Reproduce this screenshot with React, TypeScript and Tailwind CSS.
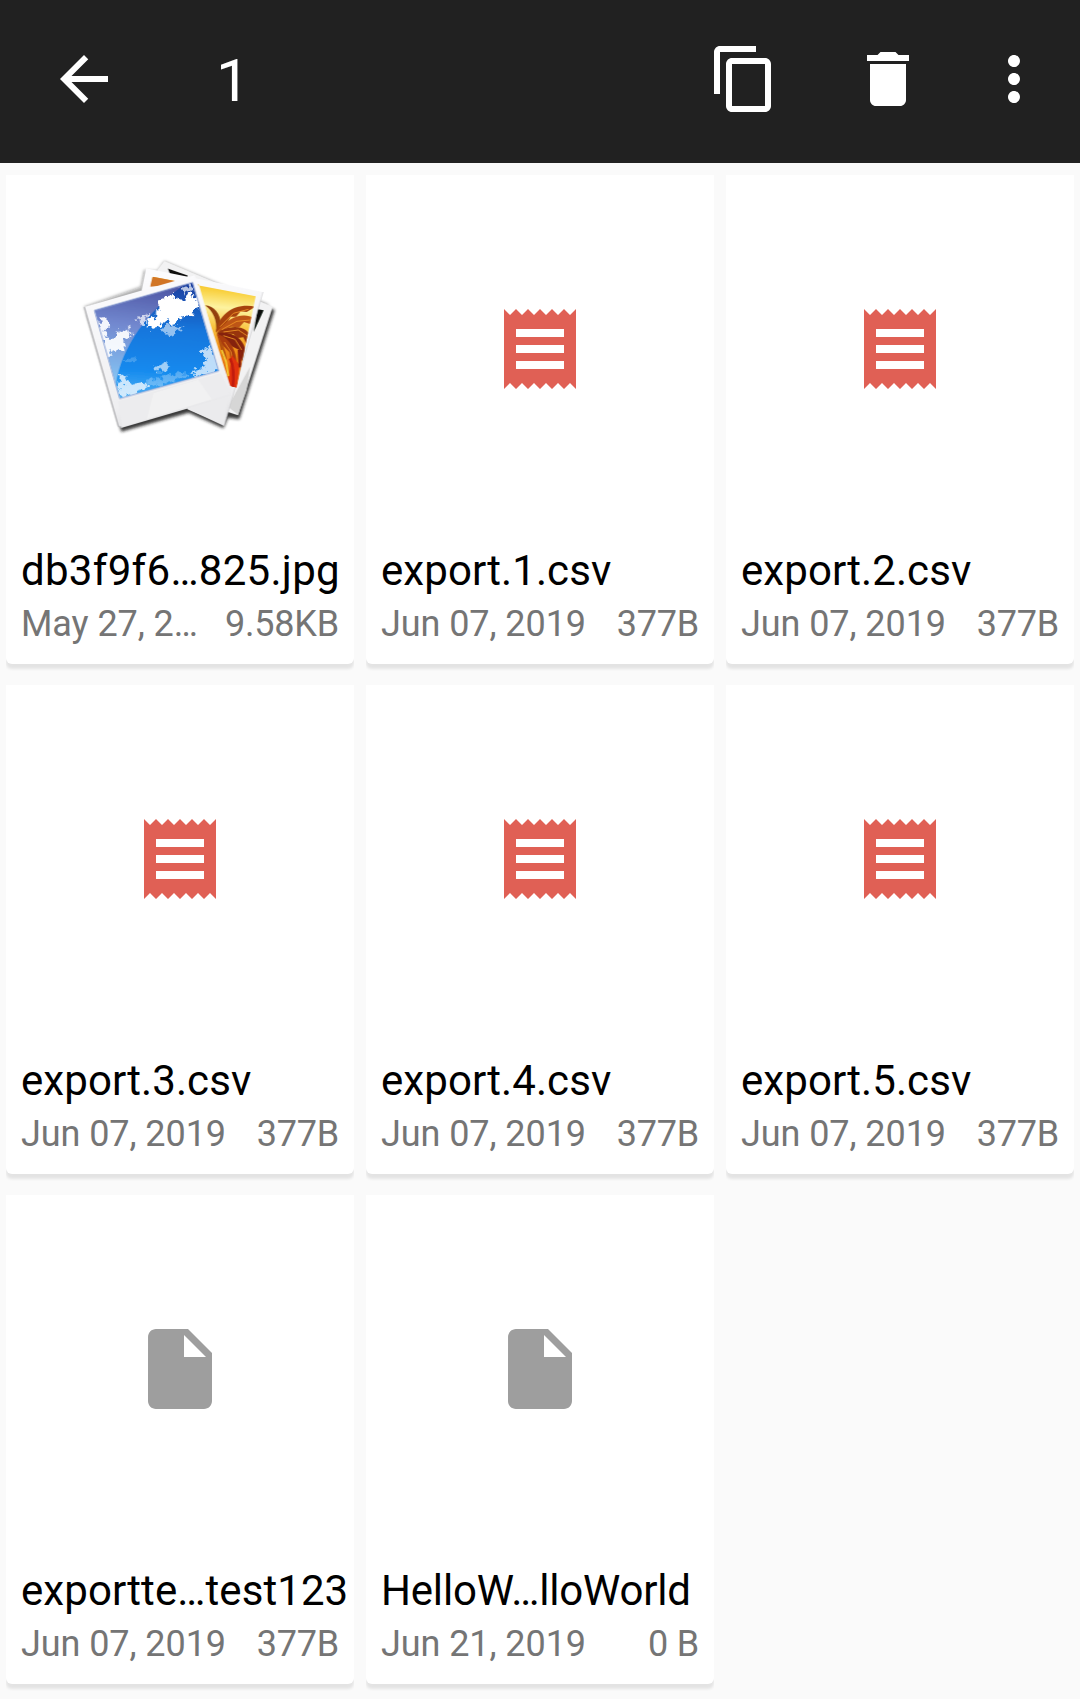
import React from "react";

type FileItem = {
  name: string;
  date: string;
  size: string;
  kind: "photo" | "csv" | "file";
  nameTracking: string;
};

const files: FileItem[] = [
  { name: "db3f9f6…825.jpg", date: "May 27, 2…", size: "9.58KB", kind: "photo", nameTracking: "tracking-[0.3px]" },
  { name: "export.1.csv", date: "Jun 07, 2019", size: "377B", kind: "csv", nameTracking: "tracking-[0.08px]" },
  { name: "export.2.csv", date: "Jun 07, 2019", size: "377B", kind: "csv", nameTracking: "tracking-[0.08px]" },
  { name: "export.3.csv", date: "Jun 07, 2019", size: "377B", kind: "csv", nameTracking: "tracking-[0.08px]" },
  { name: "export.4.csv", date: "Jun 07, 2019", size: "377B", kind: "csv", nameTracking: "tracking-[0.08px]" },
  { name: "export.5.csv", date: "Jun 07, 2019", size: "377B", kind: "csv", nameTracking: "tracking-[0.08px]" },
  { name: "exportte…test123", date: "Jun 07, 2019", size: "377B", kind: "file", nameTracking: "tracking-[0.08px]" },
  { name: "HelloW…lloWorld", date: "Jun 21, 2019", size: "0 B", kind: "file", nameTracking: "tracking-[-0.18px]" },
];

function Icon({ d, className }: { d: string; className: string }) {
  return (
    <svg viewBox="0 0 24 24" fill="currentColor" className={className}>
      <path d={d} />
    </svg>
  );
}

const BACK = "M20 11H7.83l5.59-5.59L12 4l-8 8 8 8 1.41-1.41L7.83 13H20v-2z";
const COPY =
  "M16 1H4c-1.1 0-2 .9-2 2v14h2V3h12V1zm3 4H8c-1.1 0-2 .9-2 2v14c0 1.1.9 2 2 2h11c1.1 0 2-.9 2-2V7c0-1.1-.9-2-2-2zm0 16H8V7h11v14z";
const TRASH = "M6 19c0 1.1.9 2 2 2h8c1.1 0 2-.9 2-2V7H6v12zM19 4h-3.5l-1-1h-5l-1 1H5v2h14V4z";
const MORE =
  "M12 8c1.1 0 2-.9 2-2s-.9-2-2-2-2 .9-2 2 .9 2 2 2zm0 2c-1.1 0-2 .9-2 2s.9 2 2 2 2-.9 2-2-.9-2-2-2zm0 6c-1.1 0-2 .9-2 2s.9 2 2 2 2-.9 2-2-.9-2-2-2z";
const RECEIPT =
  "M18 17H6v-2h12v2zm0-4H6v-2h12v2zm0-4H6V7h12v2zM3 22l1.5-1.5L6 22l1.5-1.5L9 22l1.5-1.5L12 22l1.5-1.5L15 22l1.5-1.5L18 22l1.5-1.5L21 22V2l-1.5 1.5L18 2l-1.5 1.5L15 2l-1.5 1.5L12 2l-1.5 1.5L9 2 7.5 3.5 6 2 4.5 3.5 3 2v20z";
const FILE =
  "M6 2c-1.1 0-1.99.9-1.99 2L4 20c0 1.1.89 2 1.99 2H18c1.1 0 2-.9 2-2V8l-6-6H6zm7 7V3.5L18.5 9H13z";

function PhotoStack() {
  return (
    <svg viewBox="0 0 660 570" className="h-[190px] w-[220px]">
      <defs>
        <linearGradient id="sky" x1="0.5" y1="0" x2="0.45" y2="1">
          <stop offset="0" stopColor="#1c3f9f" />
          <stop offset="0.4" stopColor="#1676dc" />
          <stop offset="0.75" stopColor="#1389ee" />
          <stop offset="1" stopColor="#4fb1f5" />
        </linearGradient>
        <linearGradient id="glare" x1="0.4" y1="0" x2="0.3" y2="1">
          <stop offset="0" stopColor="#4f58a6" />
          <stop offset="0.4" stopColor="#7288cf" />
          <stop offset="1" stopColor="#86c8f6" />
        </linearGradient>
        <linearGradient id="sunset" x1="0.55" y1="0" x2="0.45" y2="1">
          <stop offset="0" stopColor="#f3a71c" />
          <stop offset="0.12" stopColor="#f9cf3a" />
          <stop offset="0.27" stopColor="#fdf3a0" />
          <stop offset="0.45" stopColor="#f9c23c" />
          <stop offset="0.65" stopColor="#ef8a16" />
          <stop offset="1" stopColor="#d84308" />
        </linearGradient>
        <linearGradient id="paper" x1="0.4" y1="0" x2="0.6" y2="1">
          <stop offset="0" stopColor="#fbfbfd" />
          <stop offset="0.8" stopColor="#efeff1" />
          <stop offset="1" stopColor="#e2e2e4" />
        </linearGradient>
        <filter id="shade" x="-10%" y="-10%" width="120%" height="120%">
          <feGaussianBlur stdDeviation="4.5" />
        </filter>
        <filter id="soft">
          <feGaussianBlur stdDeviation="2.2" />
        </filter>
        <filter id="fluff" x="-10%" y="-10%" width="120%" height="120%">
          <feTurbulence type="fractalNoise" baseFrequency="0.06" numOctaves="3" seed="7" />
          <feDisplacementMap in="SourceGraphic" scale="34" xChannelSelector="R" yChannelSelector="G" />
          <feGaussianBlur stdDeviation="1.4" />
        </filter>
        <clipPath id="skyClip">
          <path d="M73 181 368 97 446 363 149 446Z" />
        </clipPath>
        <clipPath id="sunClip">
          <path d="M248 80 557 139 500 413 470 405 385 97 240 110Z" />
        </clipPath>
      </defs>
      {/* drop shadows */}
      <g filter="url(#shade)" fill="#181818">
        <path d="M50 190 154 545 356 488 460 535 474 503 508 508 614 180 450 110 300 380Z" opacity="0.85" />
        <path d="M283 33 262 62 222 60 212 110 42 170 70 250 300 200 600 165Z" opacity="0.35" />
      </g>
      <g filter="url(#soft)">
        {/* rear print */}
        <path d="M283 33 608 170 504 496 300 430 262 60Z" fill="#f2f2f3" />
        <path d="M298 60 352 79 302 70Z" fill="#080808" stroke="#080808" strokeWidth="5" />
        <path d="M563 178 581 181 551 246Z" fill="#07110c" />
        {/* sunset print */}
        <path d="M474 470 504 494 530 420 540 350Z" fill="#d6d6d6" />
        <path d="M228 55 579 126 462 528 352 476 215 120Z" fill="url(#paper)" />
        <path d="M579 126 462 528" stroke="#c9c9cb" strokeWidth="2" />
        <g clipPath="url(#sunClip)">
          <path d="M240 75 560 138 500 415 380 400Z" fill="url(#sunset)" />
          <path d="M240 75 330 95 240 120Z" fill="#d17528" />
          {/* palm crown */}
          <path d="M438 248C443 210 428 182 405 166 432 168 452 190 452 224Z" fill="#93400f" />
          <path d="M438 247C446 190 496 158 556 170L530 186 512 184 498 200 482 200 468 222Z" fill="#a6420e" />
          <path d="M440 247C474 200 520 186 552 204L540 222 522 216 508 232 484 230Z" fill="#bd5413" />
          <path d="M440 248C480 222 535 222 546 270L530 284 520 262 502 264 490 252Z" fill="#98350c" />
          <path d="M440 250C482 242 526 262 530 318L514 334 508 300 488 290Z" fill="#85240a" />
          <path d="M440 252C470 258 498 290 500 340L486 350 478 306 456 284Z" fill="#aa3b0b" />
          <path d="M440 252C452 272 468 296 470 330L458 320Z" fill="#b5510f" />
          <g fill="none" stroke="#f3992c" strokeWidth="3" opacity="0.85">
            <path d="M450 230 490 190 535 178" />
            <path d="M455 239 500 214 540 210" />
            <path d="M460 246 505 240 535 260" />
            <path d="M460 257 495 268 515 300" />
            <path d="M463 276 483 306 488 336" />
          </g>
          <path d="M485 315 508 345 499 414 474 404Z" fill="#e2310a" />
          <path d="M480 325C492 350 492 380 488 412" stroke="#c01d08" strokeWidth="8" fill="none" />
          <path d="M455 300 468 335 475 378" stroke="#f4c936" strokeWidth="6" fill="none" />
          <path d="M507 300 510 352" stroke="#8b1c08" strokeWidth="8" fill="none" />
        </g>
        {/* sky print */}
        <path d="M43 171 374 76 483 415 481 438 156 533 145 528Z" fill="url(#paper)" />
        <path d="M145 454 452 370 481 432 156 530Z" fill="#ececee" />
        <path d="M250 430 385 389 425 448 230 507Z" fill="#f3f3f4" opacity="0.7" />
        <path d="M352 478 474 440 462 525Z" fill="#ebebed" />
        <path d="M43 171 145 528 156 533" fill="none" stroke="#b9b9bc" strokeWidth="4" />
        <g clipPath="url(#skyClip)">
          <path d="M73 181 368 97 446 363 149 446Z" fill="url(#sky)" />
          <path d="M73 181 345 103C235 180 155 290 137 405Z" fill="url(#glare)" />
          <g filter="url(#fluff)" fill="#fff">
            <path d="M266 155 290 141 318 138 340 150 358 130 388 148 388 172 372 182 366 196 340 192 326 216 306 222 292 214 272 222 258 236 233 234 239 208 264 188Z" />
            <path d="M202 200 236 192 230 222 206 220Z" opacity="0.7" />
            <path d="M268 236 300 226 334 232 318 248 292 256Z" opacity="0.55" />
            <path d="M80 214 108 206 120 228 104 244 114 264 136 262 152 240 180 234 184 254 160 270 168 290 142 306 118 300 124 328 106 324Z" opacity="0.92" />
            <path d="M330 114 362 102 374 114 344 130Z" opacity="0.7" />
            <path d="M252 350 284 336 302 346 280 366 256 366Z" opacity="0.6" />
            <path d="M391 302 415 292 426 312 442 330 446 364 370 384 362 366 396 352 412 331Z" opacity="0.72" />
            <path d="M145 382 164 374 170 394 186 404 222 394 232 410 205 428 151 447Z" opacity="0.75" />
            <path d="M225 395 300 372 350 366 352 380 240 412Z" opacity="0.28" />
            <path d="M160 330 200 322 196 334 164 342Z" opacity="0.2" />
          </g>
        </g>
        <path d="M73 181 368 97 446 363 149 446Z" fill="none" stroke="#9cacd6" strokeWidth="3" />
      </g>
    </svg>
  );
}

function FileCard({ item }: { item: FileItem }) {
  return (
    <div className="h-[498px] overflow-hidden">
      <article className="h-[489px] rounded-b-[6px] bg-white shadow-[0_5px_3px_0_rgba(0,0,0,0.09)]">
        <div className="flex h-[348px] items-center justify-center">
          {item.kind === "photo" && (
            <div className="-mt-[8px]">
              <PhotoStack />
            </div>
          )}
          {item.kind === "csv" && <Icon d={RECEIPT} className="size-24 text-[#e06055]" />}
          {item.kind === "file" && <Icon d={FILE} className="size-24 text-[#9e9e9e]" />}
        </div>
        <div className="px-[15px] pt-[23px]">
          <h2 className={`text-[42px] leading-[50px] whitespace-nowrap text-black ${item.nameTracking}`}>
            {item.name}
          </h2>
          <div className="mt-[6px] flex justify-between text-[36px] leading-[44px] whitespace-nowrap text-[#757575]">
            <span className="tracking-[-0.08px]">{item.date}</span>
            <span className="tracking-[-0.2px]">{item.size}</span>
          </div>
        </div>
      </article>
    </div>
  );
}

export default function App() {
  return (
    <div className="h-[1699px] w-[1080px] overflow-hidden bg-[#fafafa] font-['Roboto',sans-serif]">
      <header className="flex h-[163px] items-center bg-[#212121] pr-[30px] pb-[5px] pl-12 text-white">
        <button aria-label="Back">
          <Icon d={BACK} className="size-[72px]" />
        </button>
        <span className="ml-24 pt-1 text-[60px] leading-[72px]">1</span>
        <div className="ml-auto flex">
          <button aria-label="Copy">
            <Icon d={COPY} className="size-[72px]" />
          </button>
          <button aria-label="Delete" className="ml-[72px]">
            <Icon d={TRASH} className="size-[72px]" />
          </button>
          <button aria-label="More options" className="ml-[54px]">
            <Icon d={MORE} className="size-[72px]" />
          </button>
        </div>
      </header>
      <main className="grid grid-cols-3 gap-x-3 gap-y-3 px-1.5 pt-3">
        {files.map((item) => (
          <FileCard key={item.name} item={item} />
        ))}
      </main>
    </div>
  );
}
